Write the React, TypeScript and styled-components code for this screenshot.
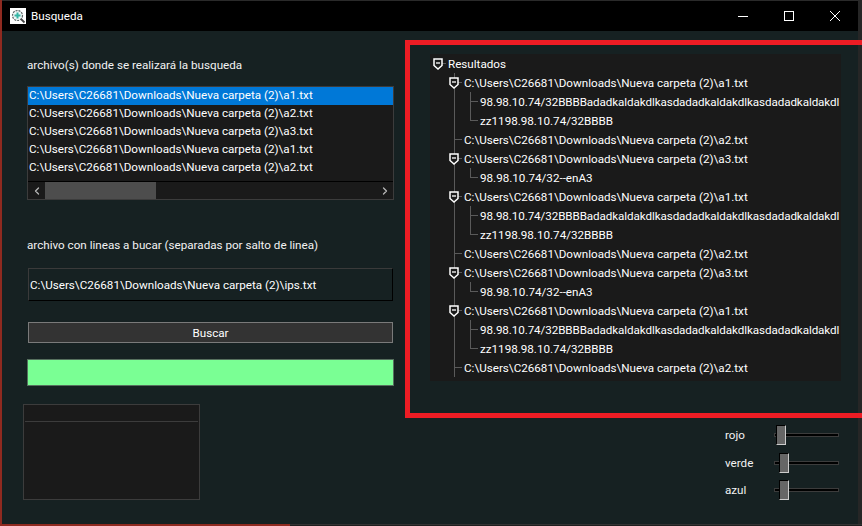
import React from 'react';
import styled, { createGlobalStyle } from 'styled-components';
import { ChevronLeft, ChevronRight } from 'lucide-react';

const GlobalStyle = createGlobalStyle`
  html, body {
    margin: 0;
    padding: 0;
    background: #161f20;
  }
  body {
    width: 862px;
    height: 526px;
    overflow: hidden;
    font-family: Roboto, "Open Sans", "Liberation Sans", sans-serif;
    font-size: 11.65px;
    color: #ffffff;
  }
`;

const BASE = 'C:\\Users\\C26681\\Downloads\\Nueva carpeta (2)\\';
const LONG =
  '98.98.10.74/32BBBBadadkaldakdlkasdadadkaldakdlkasdadadkaldakdl';

const files = ['a1.txt', 'a2.txt', 'a3.txt', 'a1.txt', 'a2.txt'];

type GuideKind = 'blank' | 'pipe' | 'tee' | 'elbow' | 'open' | 'root';

interface TreeLine {
  guides: GuideKind[];
  text: string;
}

const group = (name: string, hits: string[]): TreeLine[] => [
  { guides: ['blank', hits.length ? 'open' : 'tee'], text: BASE + name },
  ...hits.map((hit, i): TreeLine => ({
    guides: ['blank', 'pipe', i === hits.length - 1 ? 'elbow' : 'tee'],
    text: hit,
  })),
];

const treeLines: TreeLine[] = [
  { guides: ['root'], text: 'Resultados' },
  ...group('a1.txt', [LONG, 'zz1198.98.10.74/32BBBB']),
  ...group('a2.txt', []),
  ...group('a3.txt', ['98.98.10.74/32--enA3']),
  ...group('a1.txt', [LONG, 'zz1198.98.10.74/32BBBB']),
  ...group('a2.txt', []),
  ...group('a3.txt', ['98.98.10.74/32--enA3']),
  ...group('a1.txt', [LONG, 'zz1198.98.10.74/32BBBB']),
  ...group('a2.txt', []),
];

const ExpandIcon = () => (
  <svg width="10" height="12" viewBox="0 0 10 12" fill="none">
    <path d="M1 1H9V7.5L5 11L1 7.5Z" stroke="#fff" strokeWidth="1.5" fill="#1a1a1a" />
    <path d="M3 5H7" stroke="#fff" strokeWidth="1.3" />
  </svg>
);

const AppIcon = () => (
  <svg width="16" height="16" viewBox="0 0 16 16">
    <rect width="16" height="16" fill="#fff" />
    <circle cx="7.5" cy="7.5" r="5" fill="#eef6f6" stroke="#5a6464" strokeWidth="1.2" strokeDasharray="2 1" />
    <path d="M7.5 4.5V10.5M4.5 7.5H10.5" stroke="#35b5a5" strokeWidth="2" />
    <path d="M11 11L14.5 14.5" stroke="#444" strokeWidth="1.8" />
  </svg>
);

const App: React.FC = () => (
  <>
    <GlobalStyle />
    <Window>
      <WindowFrame>
        <TitleBar>
          <AppIcon />
          <Title>Busqueda</Title>
          <WindowControls>
            <WindowButton>
              <svg width="10" height="10" viewBox="0 0 10 10">
                <path d="M0 5.5H10" stroke="#fff" />
              </svg>
            </WindowButton>
            <WindowButton>
              <svg width="10" height="10" viewBox="0 0 10 10" fill="none">
                <rect x="0.5" y="0.5" width="9" height="9" stroke="#fff" />
              </svg>
            </WindowButton>
            <WindowButton>
              <svg width="10" height="10" viewBox="0 0 10 10">
                <path d="M0 0L10 10M10 0L0 10" stroke="#fff" />
              </svg>
            </WindowButton>
          </WindowControls>
        </TitleBar>
        <Content>
          <LeftColumn>
            <FieldLabel>archivo(s) donde se realizará la busqueda</FieldLabel>
            <FileList>
              <FileRows>
                {files.map((name, i) => (
                  <FileRow key={i} $selected={i === 0}>{BASE + name}</FileRow>
                ))}
              </FileRows>
              <HScroll>
                <ScrollArrow><ChevronLeft size={12} strokeWidth={2.5} /></ScrollArrow>
                <ScrollTrack><ScrollThumb /></ScrollTrack>
                <ScrollArrow><ChevronRight size={12} strokeWidth={2.5} /></ScrollArrow>
              </HScroll>
            </FileList>
            <SecondLabel>archivo con lineas a bucar (separadas por salto de linea)</SecondLabel>
            <PathBox>{BASE}ips.txt</PathBox>
            <SearchButton>Buscar</SearchButton>
            <ProgressBar />
            <MiniTable>
              <MiniHeader />
            </MiniTable>
          </LeftColumn>
          <RightColumn>
            <Highlight>
              <Tree>
                {treeLines.map((line, i) => (
                  <TreeRow key={i}>
                    {line.guides.map((kind, j) => (
                      <Guide key={j} $kind={kind}>
                        {(kind === 'open' || kind === 'root') && <ExpandIcon />}
                      </Guide>
                    ))}
                    <TreeText $tight={line.text === LONG}>{line.text}</TreeText>
                  </TreeRow>
                ))}
              </Tree>
            </Highlight>
            <Sliders>
              <SliderRow>
                <SliderLabel>rojo</SliderLabel>
                <SliderTrack><SliderHandle $offset={1} /></SliderTrack>
              </SliderRow>
              <SliderRow>
                <SliderLabel>verde</SliderLabel>
                <SliderTrack><SliderHandle $offset={4} /></SliderTrack>
              </SliderRow>
              <SliderRow>
                <SliderLabel>azul</SliderLabel>
                <SliderTrack><SliderHandle $offset={4} /></SliderTrack>
              </SliderRow>
            </Sliders>
          </RightColumn>
        </Content>
      </WindowFrame>
      <DesktopEdge />
    </Window>
  </>
);

export default App;

const Window = styled.div`
  width: 862px;
  height: 526px;
  box-sizing: border-box;
  padding-left: 2px;
  background: #8f2a20;
  display: flex;
  flex-direction: column;
`;

const WindowFrame = styled.div`
  height: 524px;
  flex: none;
  display: flex;
  flex-direction: column;
  background: #161f20;
`;

const DesktopEdge = styled.div`
  flex: 1;
  margin-left: 288px;
  background: #1f1f1f;
  border-top: 1px solid #333;
`;

const TitleBar = styled.div`
  height: 31px;
  flex: none;
  box-sizing: border-box;
  background: #000;
  border-top: 1px solid #2a2a2a;
  border-right: 4px solid #262626;
  display: flex;
  align-items: center;
  padding-left: 8px;
  gap: 5px;
`;

const Title = styled.span`
  flex: 1;
`;

const WindowControls = styled.div`
  display: flex;
  height: 100%;
`;

const WindowButton = styled.div`
  width: 46px;
  display: flex;
  align-items: center;
  justify-content: center;
`;

const Content = styled.div`
  flex: 1;
  background: linear-gradient(90deg, #162122 856px, #262626 0);
  display: flex;
`;

const LeftColumn = styled.div`
  width: 403px;
  flex: none;
  box-sizing: border-box;
  padding: 25px 0 0 25px;
  display: flex;
  flex-direction: column;
  align-items: flex-start;
`;

const FieldLabel = styled.div`
  height: 18px;
  line-height: 19px;
  color: #f2f2f2;
`;

const SecondLabel = styled(FieldLabel)`
  margin-top: 36px;
`;

const FileList = styled.div`
  width: 367px;
  height: 114px;
  margin-top: 12px;
  box-sizing: border-box;
  border: 1px solid #3c3c3c;
  background: #1a1a1a;
  display: flex;
  flex-direction: column;
`;

const FileRows = styled.div`
  flex: 1;
`;

const FileRow = styled.div<{ $selected?: boolean }>`
  height: 18px;
  line-height: 17px;
  padding-left: 1px;
  background: ${({ $selected }) => ($selected ? '#0078d7' : 'transparent')};
  white-space: nowrap;
`;

const HScroll = styled.div`
  height: 17px;
  flex: none;
  display: flex;
  align-items: center;
  border-top: 1px solid #000;
  color: #b8b8b8;
`;

const ScrollArrow = styled.div`
  width: 17px;
  flex: none;
  display: flex;
  align-items: center;
  justify-content: center;
`;

const ScrollTrack = styled.div`
  flex: 1;
  height: 100%;
  display: flex;
`;

const ScrollThumb = styled.div`
  width: 111px;
  background: #4d4d4d;
`;

const PathBox = styled.div`
  width: 365px;
  height: 33px;
  margin: 14px 0 0 1px;
  padding-left: 1px;
  box-sizing: border-box;
  border: 1px solid #3a3a3a;
  border-right-color: #000;
  border-bottom-color: #000;
  line-height: 32px;
  white-space: nowrap;
`;

const SearchButton = styled.button`
  width: 365px;
  height: 21px;
  margin: 21px 0 0 1px;
  padding: 0;
  box-sizing: border-box;
  border: 1px solid #7a7a7a;
  background: #333333;
  color: #fff;
  font: inherit;
`;

const ProgressBar = styled.div`
  width: 367px;
  height: 27px;
  margin-top: 16px;
  box-sizing: border-box;
  border: 1px solid #56705e;
  background: #7aff94;
`;

const MiniTable = styled.div`
  width: 177px;
  height: 96px;
  margin: 18px 0 0 -4px;
  box-sizing: border-box;
  border: 1px solid #3c3c3c;
  background: #1a1a1a;
  padding: 0 1px;
`;

const MiniHeader = styled.div`
  height: 16px;
  border-bottom: 1px solid #3c3c3c;
`;

const RightColumn = styled.div`
  flex: 1;
  display: flex;
  flex-direction: column;
`;

const Highlight = styled.div`
  height: 378px;
  margin-top: 9px;
  box-sizing: border-box;
  border: 5px solid #ed1c24;
  border-right: none;
  padding: 9px 0 0 20px;
`;

const Tree = styled.div`
  width: 411px;
  height: 327px;
  background: #1a1a1a;
  overflow: hidden;
`;

const TreeRow = styled.div`
  height: 19px;
  display: flex;
  align-items: stretch;
`;

const Guide = styled.div<{ $kind: GuideKind }>`
  width: 16px;
  flex: none;
  position: relative;
  display: flex;
  align-items: center;
  justify-content: center;

  svg {
    position: relative;
    z-index: 1;
  }

  &::before {
    content: '';
    position: absolute;
    left: 8px;
    width: 1px;
    top: 0;
    background: #5a5a5a;
    display: ${({ $kind }) => ($kind === 'blank' || $kind === 'root' ? 'none' : 'block')};
    height: ${({ $kind }) => ($kind === 'elbow' ? '10px' : '100%')};
  }

  &::after {
    content: '';
    position: absolute;
    left: 8px;
    top: 9px;
    height: 1px;
    width: 8px;
    background: #5a5a5a;
    display: ${({ $kind }) => ($kind === 'blank' || $kind === 'pipe' ? 'none' : 'block')};
  }
`;

const TreeText = styled.div<{ $tight?: boolean }>`
  margin-left: 2px;
  line-height: 20px;
  white-space: nowrap;
  letter-spacing: ${({ $tight }) => ($tight ? '-0.09px' : 'normal')};
`;

const Sliders = styled.div`
  align-self: flex-end;
  width: 114px;
  margin: 7px 23px 0 0;
  display: flex;
  flex-direction: column;
  gap: 7.5px;
`;

const SliderRow = styled.div`
  height: 20px;
  display: flex;
  align-items: center;
  justify-content: space-between;
`;

const SliderLabel = styled.span`
  color: #f2f2f2;
`;

const SliderTrack = styled.div`
  width: 65px;
  height: 4px;
  box-sizing: border-box;
  border: 1px solid #3c3c3c;
  background: #000;
  position: relative;
`;

const SliderHandle = styled.div<{ $offset: number }>`
  position: absolute;
  left: ${({ $offset }) => $offset}px;
  top: -9px;
  width: 10px;
  height: 20px;
  box-sizing: border-box;
  background: #666;
  border: 1px solid #000;
  border-right-color: #ccc;
  border-bottom-color: #ccc;
`;
